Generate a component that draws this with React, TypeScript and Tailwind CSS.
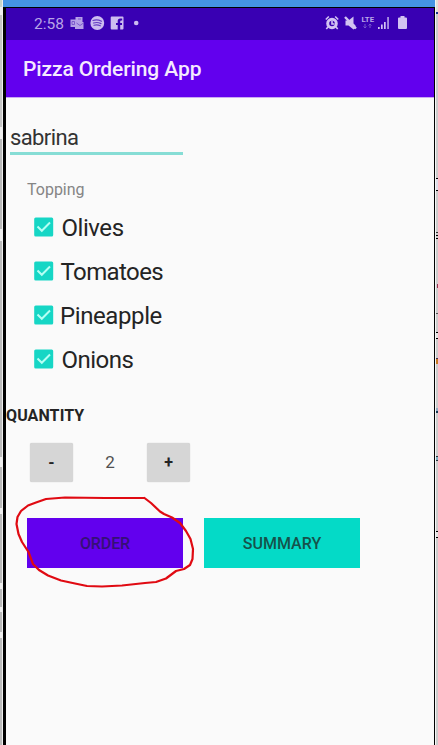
import React from "react";

const toppings = [
  { name: "Olives", style: "ml-[7.5px] tracking-[-0.45px]" },
  { name: "Tomatoes", style: "ml-[6.5px] tracking-[-0.6px]" },
  { name: "Pineapple", style: "ml-[6px] tracking-[-0.4px]" },
  { name: "Onions", style: "ml-[7.5px] tracking-[-0.5px]" },
];

function LeftIcons() {
  return (
    <svg className="ml-[6px] mt-[7px] h-[16px] w-[72px] shrink-0" viewBox="0 0 72 16" fill="#cdbcf0">
      <path d="M5.500 2h7v5h1v7H5v-2H.5V4.500h5z" opacity=".85" />
      <path d="M2 6.500h2.500v3H2zM6.500 8l3.500 2.500L13.500 8M8 4h3" fill="none" stroke="#6f48c7" strokeWidth=".8" />
      <circle cx="27.300" cy="8" r="6.900" />
      <path d="M23 5.500q4-1.500 8.500.7M23.500 8q4-1.200 7.500.6M24 10.300q3.300-1 6.300.5" fill="none" stroke="#633bc2" strokeWidth="1.200" strokeLinecap="round" />
      <path fillRule="evenodd" d="M41.500 1.500h11q1 0 1 1v11q0 1-1 1h-2.300V10h1.800V8h-1.800V6.500q0-1 1-1h1V3.500h-2q-2.500 0-2.500 2.500v2h-1.700v2h1.700v4.500h-6q-1 0-1-1v-11q0-1 1-1z" />
      <circle cx="66.200" cy="8" r="2.300" />
    </svg>
  );
}

function RightIcons() {
  return (
    <svg className="mr-[24px] mt-[6px] h-[18px] w-[86px] shrink-0" viewBox="0 0 86 18" fill="#d2c3f2">
      <circle cx="8" cy="9.500" r="4.300" fill="none" stroke="#d2c3f2" strokeWidth="3" />
      <path d="M1.800 5.500l3-3M11.200 2.500l3 3M4 13l-1.700 2M12 13l1.700 2M8 7v3h2.500" fill="none" stroke="#d2c3f2" strokeWidth="1.600" />
      <path d="M21.500 6.500h3L29.500 2.500v7l2 2V14l-2 1.500-5-4h-3z" />
      <path d="M21 3l11 11.500" stroke="#d2c3f2" strokeWidth="2.400" />
      <text x="37.500" y="8" fontFamily="Roboto, sans-serif" fontSize="7" fontWeight="700" textLength="12.500" lengthAdjust="spacingAndGlyphs" fill="#b9a7e8">LTE</text>
      <path d="M41 10v4M39.500 12.500L41 14l1.500-1.500M46 14v-4M44.500 11.500L46 10l1.500 1.500" fill="none" stroke="#7855ce" />
      <path d="M54 13h1.700v2H54zM57 10.500h1.700V15H57zM60 8h1.700v7H60z" />
      <path d="M63.200 3h1.700v12h-1.700z" opacity=".8" />
      <path d="M76.500 2h4v1.500H82q1 0 1 1V14q0 1-1 1h-7q-1 0-1-1V4.500q0-1 1-1h1.500z" />
    </svg>
  );
}

export default function App() {
  return (
    <div className="relative flex h-[745px] w-[438px] overflow-hidden bg-[#fafafa] font-['Roboto',sans-serif] text-[#242424]">
      <div className="flex w-[3px] shrink-0 flex-col bg-[#eeeeee]">
        <div className="h-[7px] w-[2px] bg-[#cbd7c9]" />
        <div className="mt-[8px] h-[112px] w-[2px] bg-[#c5c5c5]" />
        <div className="mt-[12px] h-[90px] w-[2px] bg-[#b9b9b9]" />
        <div className="mt-[12px] h-[216px] w-[2px] bg-[#bbbbbb]" />
        <div className="mt-[10px] h-[41px] w-[2px] bg-[#b9b9b9]" />
        <div className="mt-[6px] h-[69px] w-[2px] bg-[#b9b9b9]" />
        <div className="mt-[6px] h-[18px] w-[2px] bg-[#b9b9b9]" />
        <div className="mt-[5px] h-[20px] w-[2px] bg-[#b9b9b9]" />
        <div className="mt-[6px] w-[2px] grow bg-[#bbbbbb]" />
      </div>
      <div className="flex min-w-0 grow flex-col">
        <div className="h-[7px] shrink-0 bg-[#4594e4]" />
        <div className="flex min-h-0 grow flex-col border-l-[3px] border-r border-t border-black bg-[#fafafa]">
          <header className="flex h-[32px] shrink-0 items-start justify-between bg-[#3900b3]">
            <div className="flex">
              <span className="ml-[28px] mt-[6px] text-[15.500px] leading-[20px] text-[#b8a4e7]">2:58</span>
              <LeftIcons />
            </div>
            <RightIcons />
          </header>
          <div className="flex h-[58px] shrink-0 items-center border-b border-[#c9a9f3] bg-[#6200ee] pl-[17px] pt-[1px]">
            <h1 className="whitespace-nowrap text-[21px] font-medium leading-[24px] tracking-[-0.1px] text-[#f5eaff]">Pizza Ordering App</h1>
          </div>
          <main className="flex flex-col">
            <div className="ml-[4px] mt-[27px] h-[30px] w-[173px] border-b-[3px] border-[#86ddd5]">
              <div className="text-[22px] leading-[26px] tracking-[-0.6px] text-[#333333]">sabrina</div>
            </div>
            <div className="ml-[21px] mt-[25px] h-[20px] text-[16px] leading-[20px] text-[#858585]">Topping</div>
            <div className="mt-[5px] flex flex-col">
              {toppings.map((t) => (
                <label key={t.name} className="ml-[28px] flex h-[44px] items-center">
                  <svg className="h-[20px] w-[20px] shrink-0" viewBox="0 0 20 20">
                    <rect x=".2" y=".5" width="19" height="19" rx="1.500" fill="#16d6c5" />
                    <path d="M3.500 9.500l4.300 4.300L16 5.500" fill="none" stroke="#b5fff4" strokeWidth="2" />
                  </svg>
                  <span className={`pt-[1px] text-[24px] leading-[28px] ${t.style}`}>{t.name}</span>
                </label>
              ))}
            </div>
            <div className="mt-[25px] h-[20px] text-[16px] font-bold leading-[20px] tracking-[0.1px]">QUANTITY</div>
            <div className="ml-[24px] mt-[16px] flex h-[40px] w-[160px] items-center justify-between">
              <button className="h-[39px] w-[43px] rounded-[2px] bg-[#d6d6d6] pt-[2px] text-[16px] font-bold shadow-[0_0_1px_#bbbbbb]">-</button>
              <span className="pt-[1px] text-[17px] text-[#505050]">2</span>
              <button className="h-[39px] w-[43px] rounded-[2px] bg-[#d6d6d6] pt-[2px] text-[16px] font-bold shadow-[0_0_1px_#bbbbbb]">+</button>
            </div>
            <div className="ml-[21px] mt-[36px] flex gap-[21px]">
              <button className="h-[50px] w-[156px] bg-[#6200ee] pt-[1px] text-[16px] font-medium tracking-[-0.1px] text-[#351076]">ORDER</button>
              <button className="h-[50px] w-[156px] bg-[#04dac7] pt-[1px] text-[16px] font-medium text-[#16524b]">SUMMARY</button>
            </div>
          </main>
        </div>
      </div>
      <div className="flex w-[3px] shrink-0 flex-col items-end border-l border-[#f5f5f5] bg-[#cccccc]">
        <div className="h-[12px] w-[2px] bg-[#e5e1d8]" />
        <div className="h-[2px] w-[2px] bg-[#17318b]" />
        <div className="mt-[164px] h-[13px] w-[2px] border-y border-black bg-[#dddde8]" />
        <div className="mt-[41px] h-[1px] w-[2px] bg-[#333333]" />
        <div className="mt-[2px] h-[1px] w-[2px] bg-black" />
        <div className="mt-[2px] h-[1px] w-[2px] bg-black" />
        <div className="mt-[45px] h-[4px] w-[1px] bg-[#9b3154]" />
        <div className="mt-[25px] h-[1px] w-[2px] bg-[#555555]" />
        <div className="mt-[18px] h-[7px] w-[2px] border-y border-black bg-[#e4e4e4]" />
        <div className="mt-[19px] h-[6px] w-[2px] border-t border-[#453052] bg-[#c77b23]" />
        <div className="mt-[44px] h-[5px] w-[2px] border-b-2 border-[#153a54] bg-[#91acc2]" />
        <div className="mt-[43px] h-[5px] w-[2px] border-y border-[#28373e] bg-[#7fafc1]" />
        <div className="mt-[70px] h-[7px] w-[2px] border-y border-black bg-[#e4e4e4]" />
      </div>
      <svg className="pointer-events-none absolute left-0 top-0 h-[745px] w-[438px]" viewBox="0 0 438 745">
        <path d="M144 498L105 498L65 497.500L46 499L36 502.500L28 505.500L21 511L17.500 517L16.500 524L18.500 534L22 542L28.500 552L33 564L39 570L48 575.500L61 580.500L75 583.500L87 586L102 586.500L122 585.500L145 583L156 582L166 578.500L176 571L184 569L190 565L192.500 559L193 549L190.500 539L186 531L180 523L172 517.500L164 514L160 511.500L151 503L144.500 498" fill="none" stroke="#e00a12" strokeWidth="2.200" strokeLinejoin="round" strokeLinecap="round" />
      </svg>
    </div>
  );
}
